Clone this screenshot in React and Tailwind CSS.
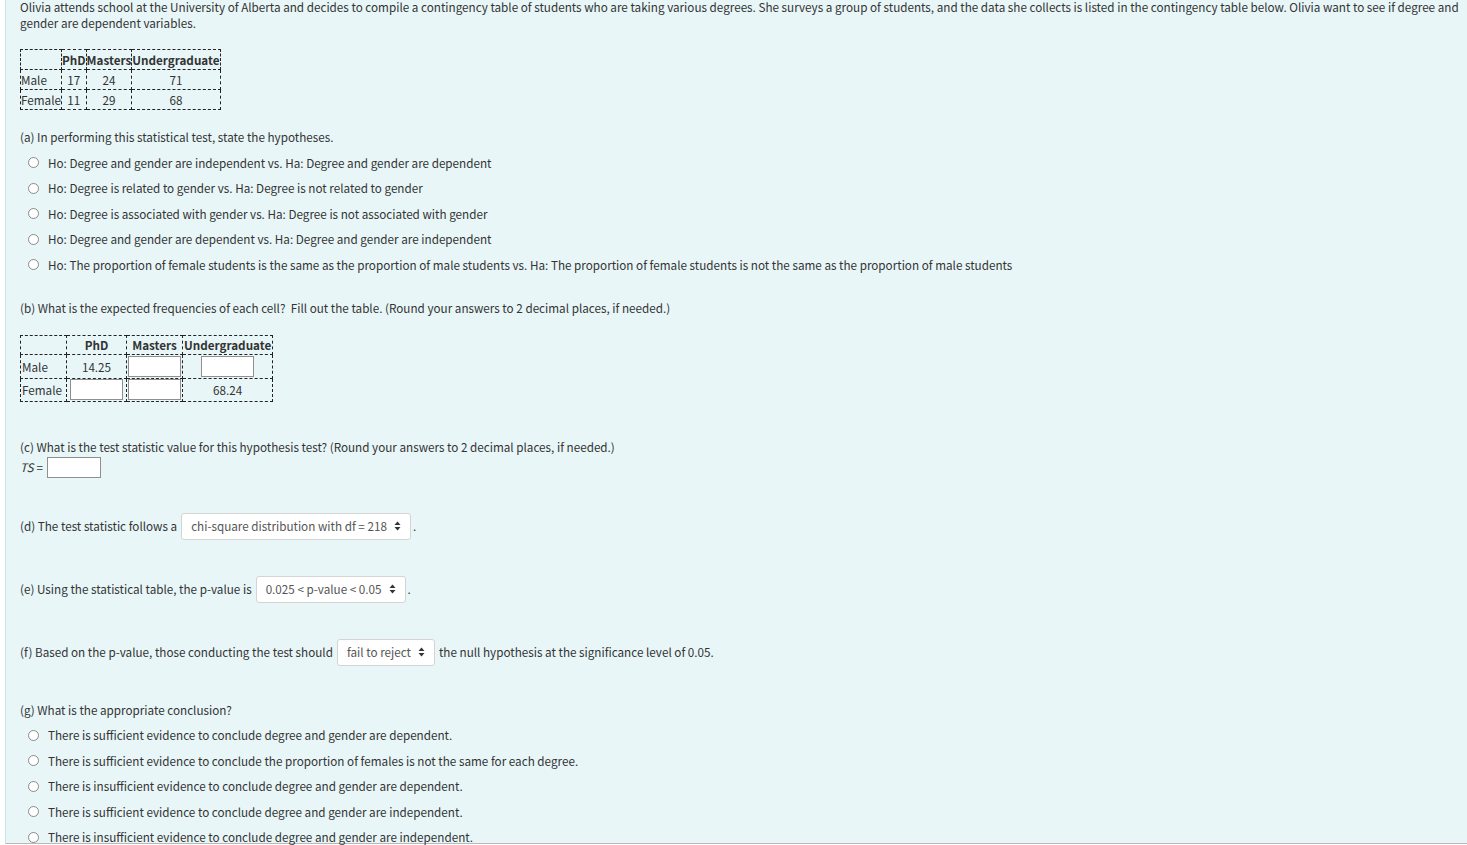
import React from "react";

const hypotheses = [
  "Ho: Degree and gender are independent vs. Ha: Degree and gender are dependent",
  "Ho: Degree is related to gender vs. Ha: Degree is not related to gender",
  "Ho: Degree is associated with gender vs. Ha: Degree is not associated with gender",
  "Ho: Degree and gender are dependent vs. Ha: Degree and gender are independent",
  "Ho: The proportion of female students is the same as the proportion of male students vs. Ha: The proportion of female students is not the same as the proportion of male students",
];

const conclusions = [
  "There is sufficient evidence to conclude degree and gender are dependent.",
  "There is sufficient evidence to conclude the proportion of females is not the same for each degree.",
  "There is insufficient evidence to conclude degree and gender are dependent.",
  "There is sufficient evidence to conclude degree and gender are independent.",
  "There is insufficient evidence to conclude degree and gender are independent.",
];

function Radio({ label }) {
  return (
    <label className="flex items-center h-[25.5px] pl-[8px]">
      <span className="w-[11px] h-[11px] rounded-full border border-[#8a8a8a] bg-white shrink-0" />
      <span className="ml-[9px] whitespace-nowrap">{label}</span>
    </label>
  );
}

function Arrows() {
  return (
    <svg width="7" height="10" viewBox="0 0 7 10" className="ml-[7px] shrink-0">
      <path d="M3.5 0.5 L6.5 4 L0.5 4 Z" fill="#333" />
      <path d="M3.5 9.5 L6.5 6 L0.5 6 Z" fill="#333" />
    </svg>
  );
}

function Select({ value }) {
  return (
    <span className="inline-flex items-center h-[27px] pl-[9px] pr-[9px] bg-white border border-[#d4d4d4] rounded-[3px] text-[#555] whitespace-nowrap">
      <span>{value}</span>
      <Arrows />
    </span>
  );
}

function Box() {
  return <span className="inline-block w-[53px] h-[21px] bg-white border border-[#8f8f8f] align-middle" />;
}

export default function App() {
  const td = "border border-dashed border-[#222] px-[1px]";
  const td1 = "border border-dashed border-[#222] px-0";
  return (
    <div
      className="h-[845px] overflow-hidden bg-white text-[#333] text-[11.7px]"
      style={{ fontFamily: '"Noto Sans CJK KR", "Noto Sans", sans-serif' }}
    >
      <div className="ml-[5px] h-full border-l border-b border-l-[#c9e4ea] border-b-[#b9b9b9] bg-[#e8f6f8] pl-[14px] pr-0">
        <p className="leading-[16px] -mt-[1px]">
          Olivia attends school at the University of Alberta and decides to compile a contingency table of students who are taking various degrees. She surveys a group of students, and the data she collects is listed in the contingency table below. Olivia want to see if degree and gender are dependent variables.
        </p>

        <table className="mt-[18px] border-collapse leading-[19px]">
          <tbody>
            <tr>
              <td className={`${td1} w-[40px]`}></td>
              <th className={`${td1} font-bold`}>PhD</th>
              <th className={`${td1} font-bold`}>Masters</th>
              <th className={`${td1} font-bold`}>Undergraduate</th>
            </tr>
            <tr>
              <td className={td1}>Male</td>
              <td className={`${td1} text-center`}>17</td>
              <td className={`${td1} text-center`}>24</td>
              <td className={`${td1} text-center`}>71</td>
            </tr>
            <tr>
              <td className={td1}>Female</td>
              <td className={`${td1} text-center`}>11</td>
              <td className={`${td1} text-center`}>29</td>
              <td className={`${td1} text-center`}>68</td>
            </tr>
          </tbody>
        </table>

        <p className="mt-[19px] leading-[16px]">(a) In performing this statistical test, state the hypotheses.</p>
        <div className="mt-[5px]">
          {hypotheses.map((h) => (
            <Radio key={h} label={h} />
          ))}
        </div>

        <p className="mt-[22px] leading-[16px]">
          (b) What is the expected frequencies of each cell?&nbsp; Fill out the table. (Round your answers to 2 decimal places, if needed.)
        </p>

        <table className="mt-[19px] border-collapse leading-[17px]">
          <tbody>
            <tr className="h-[19px]">
              <td className={`${td} w-[46px]`}></td>
              <th className={`${td} w-[60px] font-bold`}>PhD</th>
              <th className={`${td} w-[55px] font-bold px-[4px]`}>Masters</th>
              <th className={`${td} font-bold`}>Undergraduate</th>
            </tr>
            <tr className="h-[24px]">
              <td className={td}>Male</td>
              <td className={`${td} text-center`}>14.25</td>
              <td className={`${td} text-center px-0`}>
                <Box />
              </td>
              <td className={`${td} text-center`}>
                <Box />
              </td>
            </tr>
            <tr className="h-[23px]">
              <td className={td}>Female</td>
              <td className={`${td} text-center`}>
                <Box />
              </td>
              <td className={`${td} text-center px-0`}>
                <Box />
              </td>
              <td className={`${td} text-center`}>68.24</td>
            </tr>
          </tbody>
        </table>

        <p className="mt-[37px] leading-[16px]">
          (c) What is the test statistic value for this hypothesis test? (Round your answers to 2 decimal places, if needed.)
        </p>
        <div className="mt-[2px] flex items-center h-[21px]">
          <span className="italic">TS</span>
          <span className="ml-[3px]">=</span>
          <span className="ml-[4px] inline-block w-[54px] h-[21px] bg-white border border-[#8f8f8f]" />
        </div>

        <div className="mt-[35px] flex items-center h-[27px]">
          <span>(d) The test statistic follows a</span>
          <span className="ml-[4px]">
            <Select value="chi-square distribution with df = 218" />
          </span>
          <span className="ml-[2px]">.</span>
        </div>

        <div className="mt-[36px] flex items-center h-[27px]">
          <span>(e) Using the statistical table, the p-value is</span>
          <span className="ml-[4px]">
            <Select value="0.025 < p-value < 0.05" />
          </span>
          <span className="ml-[2px]">.</span>
        </div>

        <div className="mt-[36px] flex items-center h-[27px]">
          <span>(f) Based on the p-value, those conducting the test should</span>
          <span className="ml-[4px]">
            <Select value="fail to reject" />
          </span>
          <span className="ml-[4px]">the null hypothesis at the significance level of 0.05.</span>
        </div>

        <p className="mt-[36px] leading-[16px]">(g) What is the appropriate conclusion?</p>
        <div className="mt-[5px]">
          {conclusions.map((c) => (
            <Radio key={c} label={c} />
          ))}
        </div>
      </div>
    </div>
  );
}
